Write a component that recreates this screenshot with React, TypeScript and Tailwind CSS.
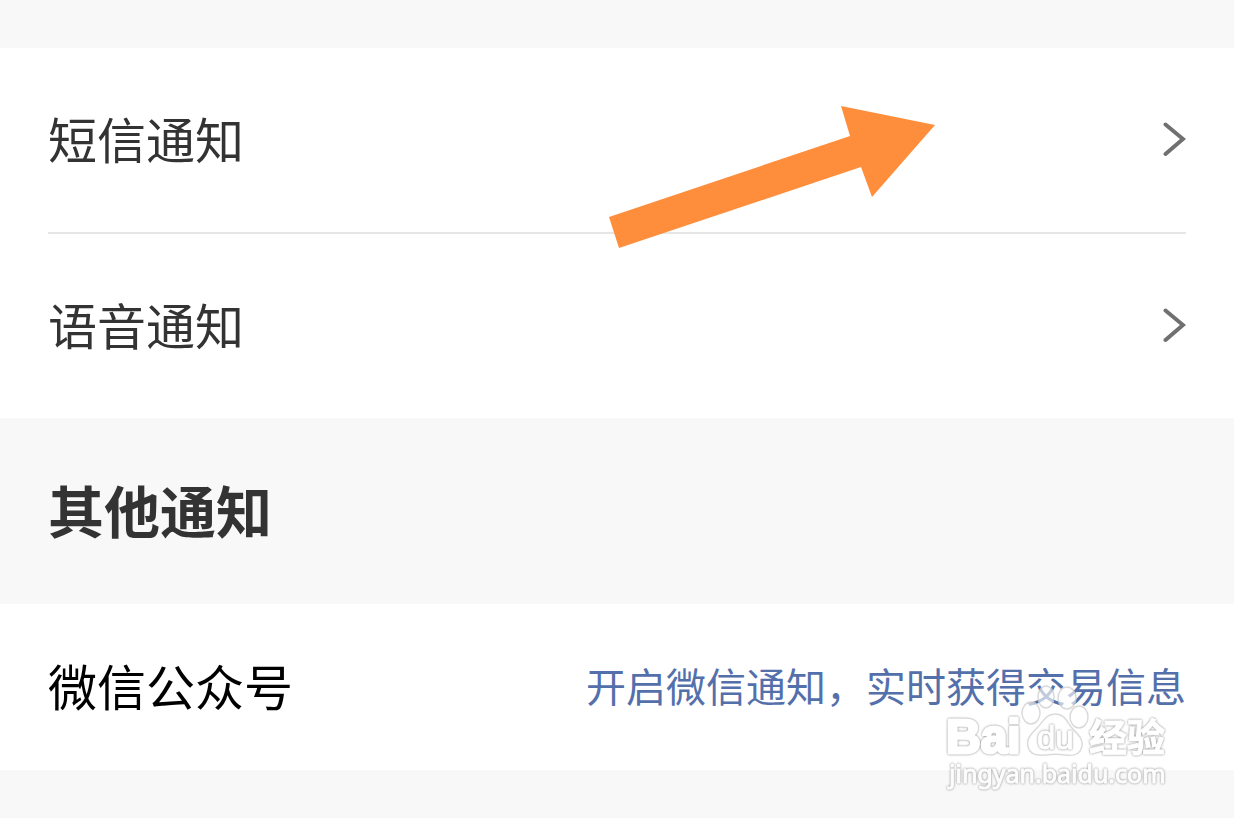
import type { ReactNode } from "react";

type RowProps = {
  title: string;
};

function NoticeRow({ title }: RowProps) {
  return (
    <button
      type="button"
      className="flex h-46 w-full items-center justify-between pb-0.5 text-left text-[49px] leading-[72px] text-[#333333]"
    >
      <span className="pb-0.5">{title}</span>
      <svg
        className="h-9 w-6"
        viewBox="0 0 24 36"
        fill="none"
        stroke="#707070"
        strokeWidth="4"
        strokeLinecap="round"
        aria-hidden="true"
      >
        <path d="M3.5 3.5 L21 18 L3.5 33" />
      </svg>
    </button>
  );
}

function Panel({ children }: { children: ReactNode }) {
  return <section className="relative bg-white px-12">{children}</section>;
}

function Arrow() {
  return (
    <svg
      className="pointer-events-none absolute top-[58px] left-[608px] h-[143px] w-[328px]"
      viewBox="0 0 328 143"
      aria-hidden="true"
    >
      <path
        fill="#ff8e3c"
        d="M1 111 L242 30 L233 0 L327 19 L264 91 L253 61 L11 142 Z"
      />
    </svg>
  );
}

function Watermark() {
  return (
    <svg
      className="pointer-events-none absolute top-[76px] right-[48px] h-[116px] w-[246px] opacity-80"
      viewBox="0 0 246 116"
      fill="#ffffff"
      stroke="#ffffff"
      strokeWidth="2"
      strokeLinejoin="round"
      aria-hidden="true"
    >
      <g stroke="#d2d2d2" strokeWidth="1.5" fillOpacity="0.8">
        <ellipse cx="106" cy="17" rx="8" ry="11" />
        <ellipse cx="127" cy="18" rx="9" ry="11" />
        <ellipse cx="91" cy="33" rx="9" ry="11" />
        <ellipse cx="139" cy="37" rx="9" ry="11" />
        <path d="M115 34 C125 34 127 42 132 48 C138 55 143 58 142 66 C140 76 132 76 125 75 C118 74 113 74 106 75 C98 76 90 75 88 67 C86 59 91 54 97 48 C103 42 106 34 115 34 Z" />
      </g>
      <g className="drop-shadow-[0_0_1px_#666666]">
        <text
          x="6"
          y="73"
          strokeWidth="3"
          className="font-['Liberation_Sans',sans-serif] text-[48px] font-bold"
        >
          Bai
        </text>
        <text
          x="97"
          y="69"
          strokeWidth="1"
          className="font-['Liberation_Sans',sans-serif] text-[33px]"
        >
          du
        </text>
        <text
          x="149"
          y="71"
          strokeWidth="1"
          className="font-['Noto_Sans_CJK_SC',sans-serif] text-[38px] font-bold"
        >
          经验
        </text>
        <text
          x="9"
          y="103"
          strokeWidth="1"
          className="font-['Noto_Sans',sans-serif] text-[25px]"
        >
          jingyan.baidu.com
        </text>
      </g>
    </svg>
  );
}

export default function App() {
  return (
    <main className="min-h-screen bg-[#f8f8f8] pt-12 font-['Noto_Sans_CJK_SC',sans-serif]">
      <Panel>
        <NoticeRow title="短信通知" />
        <hr className="border-t-2 border-[#e6e6e6]" />
        <NoticeRow title="语音通知" />
        <Arrow />
      </Panel>
      <h2 className="flex h-[186px] items-center px-12 pb-1 text-[56px] leading-[80px] font-bold text-[#333333]">
        其他通知
      </h2>
      <Panel>
        <div className="flex h-[166px] items-center justify-between pb-1">
          <span className="text-[49px] leading-[72px] text-black">
            微信公众号
          </span>
          <a
            href="#wechat"
            className="text-[40px] leading-[60px] text-[#5470ab]"
          >
            开启微信通知，实时获得交易信息
          </a>
        </div>
        <Watermark />
      </Panel>
    </main>
  );
}
